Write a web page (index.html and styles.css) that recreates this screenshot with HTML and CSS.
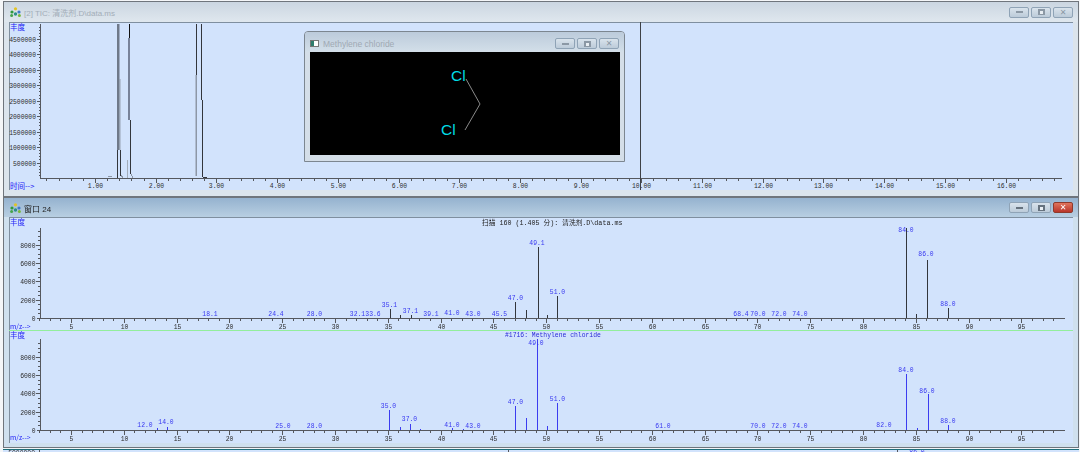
FILE: index.html
```html
<!DOCTYPE html>
<html lang="en">
<head>
  <meta charset="UTF-8">
  <meta name="viewport" content="width=device-width, initial-scale=1.0">
  <title>Methylene chloride</title>
  <link rel="stylesheet" href="styles.css">
</head>
<body>

  <div class="desktop">
    <div class="window inactive tic-window">
      <div class="titlebar">
        <svg class="app-icon" viewBox="0 0 11 10"><use href="#appIcon"></use></svg>
        <span class="title">[2] TIC: 清洗剂.D\data.ms</span>
        <div class="buttons">
          <span class="btn"><i class="glyph-min"></i></span>
          <span class="btn"><i class="glyph-max"></i></span>
          <span class="btn"><i class="glyph-close">✕</i></span>
        </div>
      </div>
      <div class="client">
        <svg id="ticChart" class="chart" viewBox="9 22 1064 168"></svg>

        <div class="dialog inactive">
          <div class="dialog-bar">
            <svg class="doc-icon" viewBox="0 0 9 7">
              <rect x="0.5" y="0.5" width="8" height="6" fill="#fff" stroke="#777"/>
              <rect x="1" y="1" width="3" height="5" fill="#2f7d6d"/>
            </svg>
            <span class="dialog-title">Methylene chloride</span>
            <div class="buttons">
              <span class="btn"><i class="glyph-min"></i></span>
              <span class="btn"><i class="glyph-max"></i></span>
              <span class="btn"><i class="glyph-close">✕</i></span>
            </div>
          </div>
          <svg class="molecule" viewBox="310 52 310 103">
            <polyline points="466,79 480,104 465,130" fill="none" stroke="#8a8a8a" stroke-width="1"/>
            <text x="451" y="80.5">Cl</text>
            <text x="441" y="135">Cl</text>
          </svg>
        </div>
      </div>
    </div>

    <div class="window spectrum-window">
      <div class="titlebar">
        <svg class="app-icon" viewBox="0 0 11 10"><use href="#appIcon"></use></svg>
        <span class="title">窗口 24</span>
        <div class="buttons">
          <span class="btn"><i class="glyph-min"></i></span>
          <span class="btn"><i class="glyph-max"></i></span>
          <span class="btn btn-close"><i class="glyph-close">✕</i></span>
        </div>
      </div>
      <div class="client">
        <svg id="specChart" class="chart" viewBox="9 217 1064 226"></svg>
      </div>
    </div>

    <div class="next-window">
      <svg id="nextChart" class="chart" viewBox="9 449 1064 4"></svg>
    </div>
  </div>

  <svg class="icon-defs" width="0" height="0">
    <symbol id="appIcon" viewBox="0 0 11 10">
      <circle cx="5.5" cy="1.8" r="1.6" fill="#e2c326"/>
      <circle cx="2" cy="5" r="1.6" fill="#2f9a3c"/>
      <circle cx="9" cy="5" r="1.6" fill="#3f78c8"/>
      <circle cx="1.6" cy="8.4" r="1.5" fill="#46a44a"/>
      <circle cx="5.5" cy="7" r="1.7" fill="#2c8f86"/>
      <circle cx="9.4" cy="8.4" r="1.5" fill="#7ab83c"/>
    </symbol>
  </svg>

  <script src="script.js"></script>
</body>
</html>
```

FILE: styles.css
```css
html, body {
  margin: 0;
  height: 452px;
  overflow: hidden;
  background: #f4f6f8;
}
.desktop {
  display: flex;
  flex-direction: column;
  width: 1076px;
  margin: 1px 0 0 3px;
  filter: blur(0.3px);
}
.window {
  box-sizing: border-box;
  border: 1px solid #6f757c;
  padding: 0 4px 4px 5px;
  background: #b9cde0;
}
.tic-window {
  height: 196px;
  padding-bottom: 6px;
  background: #dbe4ec;
}
.spectrum-window {
  height: 251px;
  background: #cfe0ee;
}
.titlebar {
  display: flex;
  align-items: center;
  height: 20px;
  background: linear-gradient(#95b2cf, #b8cfe2);
  margin: 0 -4px 0 -5px;
  padding: 0 5px 0 6px;
}
.tic-window .titlebar {
  background: linear-gradient(#cbd6e1, #dfe7ee);
}
.spectrum-window .titlebar {
  height: 19px;
}
.app-icon {
  width: 11px;
  height: 10px;
  margin-right: 3px;
}
.title {
  font-family: "Liberation Sans", "Noto Sans CJK SC", sans-serif;
  font-size: 8px;
  color: #222;
  padding-top: 1px;
}
.inactive .title {
  color: #a3adb8;
}
.buttons {
  display: flex;
  gap: 2px;
  margin-left: auto;
}
.btn {
  display: flex;
  align-items: center;
  justify-content: center;
  box-sizing: border-box;
  width: 20px;
  height: 11px;
  border: 1px solid #8fa3b6;
  border-radius: 2px;
  background: linear-gradient(#d9e3ec, #bccbd9);
}
.btn-close {
  border-color: #8f3a2c;
  background: linear-gradient(#e0745c, #b9352a);
}
.glyph-min {
  width: 7px;
  height: 2px;
  background: #fff;
  border: 1px solid #66727e;
  box-sizing: border-box;
}
.glyph-max {
  width: 7px;
  height: 6px;
  box-sizing: border-box;
  border: 2px solid #66727e;
  border-bottom-width: 1px;
  background: #e8eef3;
}
.glyph-close {
  font-family: "DejaVu Sans", sans-serif;
  font-style: normal;
  font-size: 8px;
  font-weight: bold;
  line-height: 9px;
  color: #5f6b76;
}
.inactive .glyph-min,
.inactive .glyph-max {
  border-color: #8b98a5;
}
.inactive .glyph-close {
  color: #8b98a5;
}
.btn-close .glyph-close {
  color: #fff;
}
.client {
  position: relative;
  box-sizing: border-box;
  height: 168px;
  background: #d2e3fc;
  box-shadow: inset 1px 1px 0 #7f8f9f;
  width: 1064px;
}
.spectrum-window .client {
  height: 226px;
}
.chart {
  display: block;
  width: 1064px;
  height: 100%;
}
.next-window {
  height: 4px;
  margin-top: 1px;
  padding-left: 5px;
  background: #d2e3fc;
  border-top: 1px solid #1f6f7a;
}
.next-window .chart {
  height: 4px;
}
.icon-defs {
  position: absolute;
}

/* svg chart parts */
.axis {
  stroke: #55585e;
  stroke-width: 1;
  shape-rendering: crispEdges;
}
.peak {
  stroke-width: 1;
  shape-rendering: crispEdges;
}
.tick-label {
  font-family: "Liberation Mono", monospace;
  font-size: 6.4px;
  fill: #2c2c2c;
}
.peak-label {
  font-family: "Liberation Mono", monospace;
  font-size: 6.4px;
  fill: #3636f0;
  text-anchor: middle;
}
.axis-name {
  font-family: "Noto Sans CJK SC", sans-serif;
  font-size: 7.5px;
  fill: #2020f5;
}
.axis-name.small {
  font-size: 6.8px;
}
.chart-title {
  font-family: "Liberation Mono", "Noto Sans CJK SC", monospace;
  font-size: 6.7px;
  fill: #222;
}
.ref-title {
  font-size: 6.4px;
  fill: #2a2ad8;
}

/* structure window on top of the TIC plot */
.dialog {
  position: absolute;
  left: 295px;
  top: 9px;
  box-sizing: border-box;
  width: 321px;
  height: 131px;
  padding: 0 5px 6px 5px;
  border: 1px solid #7c8690;
  border-radius: 4px 4px 0 0;
  background: #d4deE8;
}
.dialog-bar {
  display: flex;
  align-items: center;
  box-sizing: border-box;
  height: 20px;
  background: linear-gradient(#bccbdb, #d3dfe9);
  margin: 0 -5px;
  padding: 3px 5px 0 5px;
  border-radius: 3px 3px 0 0;
}
.doc-icon {
  width: 9px;
  height: 7px;
  margin-right: 4px;
}
.dialog-title {
  font-family: "Liberation Sans", sans-serif;
  font-size: 8.5px;
  color: #a0a9b3;
}
.molecule {
  display: block;
  width: 310px;
  height: 103px;
  background: #000;
}
.molecule text {
  font-family: "Liberation Sans", sans-serif;
  font-size: 15.5px;
  fill: #00dbe6;
}
```

FILE: script.js
```javascript
const NAVY = '#33363c';
const BLUE = '#3c3cf0';

function line(x1, y1, x2, y2, cls, color) {
  const stroke = color ? ` style="stroke:${color}"` : '';
  return `<line class="${cls}" x1="${x1}" y1="${y1}" x2="${x2}" y2="${y2}"${stroke}/>`;
}

function text(x, y, str, cls, anchor) {
  const a = anchor ? ` text-anchor="${anchor}"` : '';
  return `<text class="${cls}" x="${x}" y="${y}"${a}>${str}</text>`;
}

// ---- TIC plot ----
function drawTic() {
  let s = '';
  const base = 178;
  s += line(40.5, 24, 40.5, base, 'axis');
  s += line(40, base + 0.5, 1062, base + 0.5, 'axis');

  // y ticks, 100000 apart
  for (let i = 1; i <= 49; i++) {
    const y = Math.round(base - i * 3.09) + 0.5;
    const major = i % 5 === 0;
    s += line(major ? 37 : 39, y, 40, y, 'axis');
    if (major) {
      s += text(36, y + 2.5, i * 100000, 'tick-label', 'end');
    }
  }

  // x ticks, 0.2 min apart
  for (let i = 1; i <= 84; i++) {
    const x = Math.round(34.3 + i * 12.14) + 0.5;
    const major = i % 5 === 0;
    s += line(x, base, x, base + (major ? 5 : 3), 'axis');
    if (major) {
      s += text(x, 188, (i / 5).toFixed(2), 'tick-label', 'middle');
    }
  }

  // peaks
  const gray = '#8d97a6';
  s += `<rect x="117" y="24" width="2.5" height="126" fill="#6f7989"/>`;
  s += `<rect x="119" y="79" width="1.5" height="71" fill="#97a3b3"/>`;
  s += line(117.5, 150, 117.5, 178, 'peak', NAVY);
  s += line(120.5, 150, 120.5, 176, 'peak', NAVY);
  s += line(121.5, 175, 122.5, 178, 'peak', gray);
  s += `<rect x="128" y="38" width="2" height="82" fill="#78839a"/>`;
  s += line(129.5, 24, 129.5, 38, 'peak', '#111');
  s += line(130.5, 120, 130.5, 174, 'peak', NAVY);
  s += line(127.5, 160, 127.5, 178, 'peak', '#a3adba');
  s += line(131.5, 174, 132.5, 178, 'peak', gray);
  s += line(196.5, 24, 196.5, 75, 'peak', NAVY);
  s += `<rect x="195.5" y="75" width="1.5" height="101" fill="${gray}"/>`;
  s += line(201.5, 24, 201.5, 100, 'peak', NAVY);
  s += line(202.5, 100, 202.5, 177, 'peak', NAVY);
  s += line(203, 177.5, 207, 177.5, 'peak', NAVY);
  s += line(108, 176.5, 112, 176.5, 'peak', gray);

  s += line(640.5, 22, 640.5, 190, 'axis', '#3e4146');
  s += text(10, 29.5, '丰度', 'axis-name');
  s += text(10, 188.5, '时间--&gt;', 'axis-name');
  document.getElementById('ticChart').innerHTML = s;
}

// ---- mass spectrum panes ----
const mzX = mz => 71 + (mz - 5) * 10.56;

function drawPane(base, top, color, peaks, labels, nameY) {
  let s = '';
  const axisEnd = 1065;
  s += line(40.5, top, 40.5, base, 'axis');
  s += line(40, base + 0.5, axisEnd, base + 0.5, 'axis');

  // y ticks, every 500 counts
  for (let i = 1; i <= 19; i++) {
    const y = Math.round(base - i * 4.58) + 0.5;
    const major = i % 4 === 0;
    s += line(major ? 36 : 38, y, 40, y, 'axis');
    if (major) {
      s += text(35.5, y + 2.5, i * 500, 'tick-label', 'end');
    }
  }
  s += text(35.5, base + 2.5, '0', 'tick-label', 'end');
  s += line(37, base + 0.5, 40, base + 0.5, 'axis');

  // x ticks, each m/z
  for (let mz = 2; mz <= 98; mz++) {
    const x = Math.round(mzX(mz)) + 0.5;
    const major = mz % 5 === 0;
    s += line(x, base, x, base + (major ? 5 : 3), 'axis');
    if (major) {
      s += text(x, base + 10.5, mz, 'tick-label', 'middle');
    }
  }

  peaks.forEach(p => {
    s += line(p[0], p[1], p[0], base, 'peak', color);
  });
  labels.forEach(l => {
    s += text(l[0], l[1], l[2], 'peak-label');
  });
  s += text(10, nameY, 'm/z--&gt;', 'axis-name small');
  return s;
}

function drawSpectra() {
  let s = '';

  s += text(482, 224.5, '扫描 160 (1.405 分): 清洗剂.D\\data.ms', 'chart-title');
  s += text(10, 224.5, '丰度', 'axis-name');
  s += drawPane(318, 228, NAVY, [
    [906.5, 228], [927.5, 260], [948.5, 308], [916.5, 314],
    [538.5, 247], [515.5, 302], [526.5, 310], [547.5, 315], [557.5, 296],
    [390.5, 309], [400.5, 315], [411.5, 315]
  ], [
    [210, 316, '18.1'], [276, 316, '24.4'], [314.5, 316, '28.0'], [357.5, 316, '32.1'],
    [373, 316, '33.6'], [389.5, 307, '35.1'], [410.5, 313, '37.1'], [431, 316, '39.1'],
    [452, 315, '41.0'], [473, 316, '43.0'], [499.5, 316, '45.5'], [515.5, 300, '47.0'],
    [537, 245, '49.1'], [557.5, 294, '51.0'], [741, 316, '68.4'], [758, 316, '70.0'],
    [779, 316, '72.0'], [800, 316, '74.0'], [906, 232, '84.0'], [926, 256, '86.0'],
    [948, 306, '88.0']
  ], 328.5);

  s += line(9, 330.5, 1073, 330.5, 'axis', '#92ee9c');
  s += text(10, 337.5, '丰度', 'axis-name');
  s += text(505, 337, '#1716: Methylene chloride', 'chart-title ref-title');
  s += drawPane(430, 339, BLUE, [
    [906.5, 374], [928, 394], [948.5, 425], [917.5, 428],
    [537.5, 339], [515.5, 406], [526.5, 418], [547.5, 426], [557.5, 403],
    [389.5, 410], [400.5, 427], [410.5, 424], [420.5, 429],
    [157.5, 428], [167.5, 427], [452.5, 428], [463.5, 429]
  ], [
    [145, 427, '12.0'], [166, 424, '14.0'], [283, 428, '25.0'], [314.5, 428, '28.0'],
    [388.5, 408, '35.0'], [409.5, 421, '37.0'], [452, 427, '41.0'], [473, 428, '43.0'],
    [515.5, 404, '47.0'], [536, 344.5, '49.0'], [557.5, 401, '51.0'], [663, 428, '61.0'],
    [758, 428, '70.0'], [779, 428, '72.0'], [800, 428, '74.0'], [884, 427, '82.0'],
    [906, 372, '84.0'], [927, 393, '86.0'], [948, 423, '88.0']
  ], 440);

  document.getElementById('specChart').innerHTML = s;
}

function drawNext() {
  let s = '';
  s += line(40.5, 449, 40.5, 453, 'axis');
  s += line(509.5, 449, 509.5, 453, 'axis');
  s += line(898.5, 449, 898.5, 453, 'axis');
  s += text(36, 454, '5000000', 'tick-label', 'end');
  s += text(918, 453, '86.0', 'peak-label');
  document.getElementById('nextChart').innerHTML = s;
}

drawTic();
drawSpectra();
drawNext();
```
